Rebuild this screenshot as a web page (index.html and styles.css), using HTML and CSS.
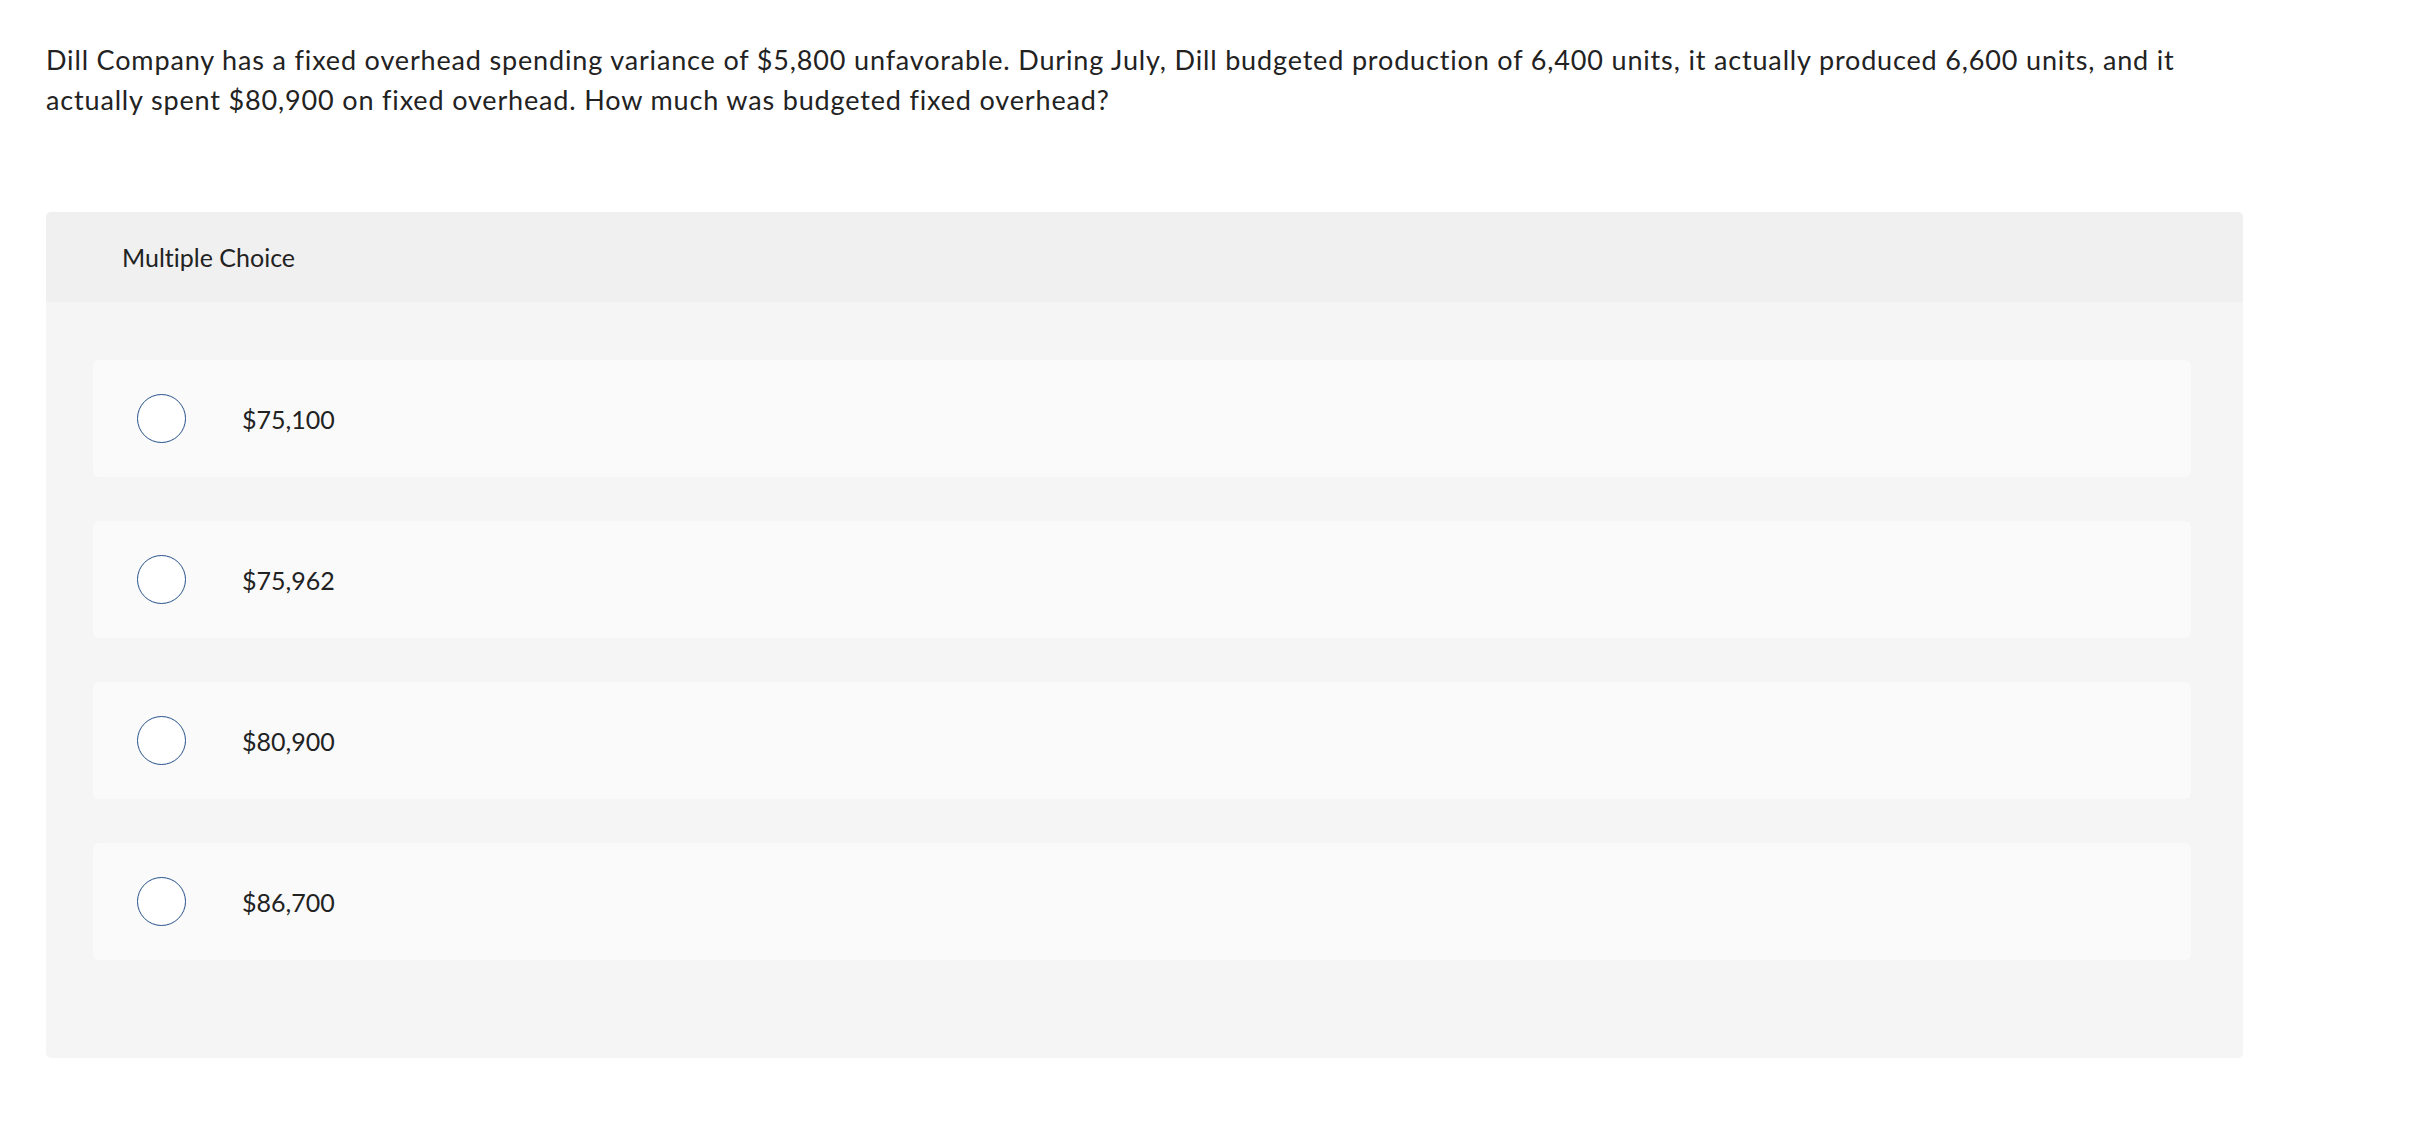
FILE: index.html
```html
<!DOCTYPE html>
<html lang="en">
<head>
<meta charset="utf-8">
<title>Multiple Choice</title>
<link rel="stylesheet" href="styles.css">
</head>
<body>
<main class="page">
  <p class="question">Dill Company has a fixed overhead spending variance of $5,800 unfavorable. During July, Dill budgeted production of 6,400 units, it actually produced 6,600 units, and it actually spent $80,900 on fixed overhead. How much was budgeted fixed overhead?</p>
  <section class="panel">
    <div class="panel-head">Multiple Choice</div>
    <div class="options">
      <label class="option"><span class="radio"></span><span class="opt-text">$75,100</span></label>
      <label class="option"><span class="radio"></span><span class="opt-text">$75,962</span></label>
      <label class="option"><span class="radio"></span><span class="opt-text">$80,900</span></label>
      <label class="option"><span class="radio"></span><span class="opt-text">$86,700</span></label>
    </div>
  </section>
</main>
</body>
</html>
```
FILE: styles.css
```css
html, body {
  margin: 0;
  padding: 0;
  background: #ffffff;
}
body {
  font-family: Lato, "Open Sans", "Liberation Sans", sans-serif;
  font-variant-ligatures: none;
  color: #222222;
}
.page {
  width: 2197px;
  padding: 40px 0 0 46px;
}
.question {
  margin: 0;
  font-size: 27px;
  line-height: 40px;
  letter-spacing: 0.84px;
}
.panel {
  margin-top: 92px;
  background: #f5f5f5;
  border-radius: 5px;
  overflow: hidden;
}
.panel-head {
  height: 90px;
  display: flex;
  align-items: center;
  padding-left: 76px;
  background: #f0f0f0;
  font-size: 25px;
}
.options {
  display: flex;
  flex-direction: column;
  gap: 44px;
  padding: 58px 52px 98px 47px;
}
.option {
  height: 117px;
  display: flex;
  align-items: center;
  padding-left: 44px;
  background: #fafafa;
  border-radius: 6px;
}
.radio {
  width: 47px;
  height: 47px;
  border: 1px solid #27528a;
  border-radius: 50%;
  background: #ffffff;
  flex: none;
}
.opt-text {
  margin-left: 56px;
  font-size: 25px;
}
```
